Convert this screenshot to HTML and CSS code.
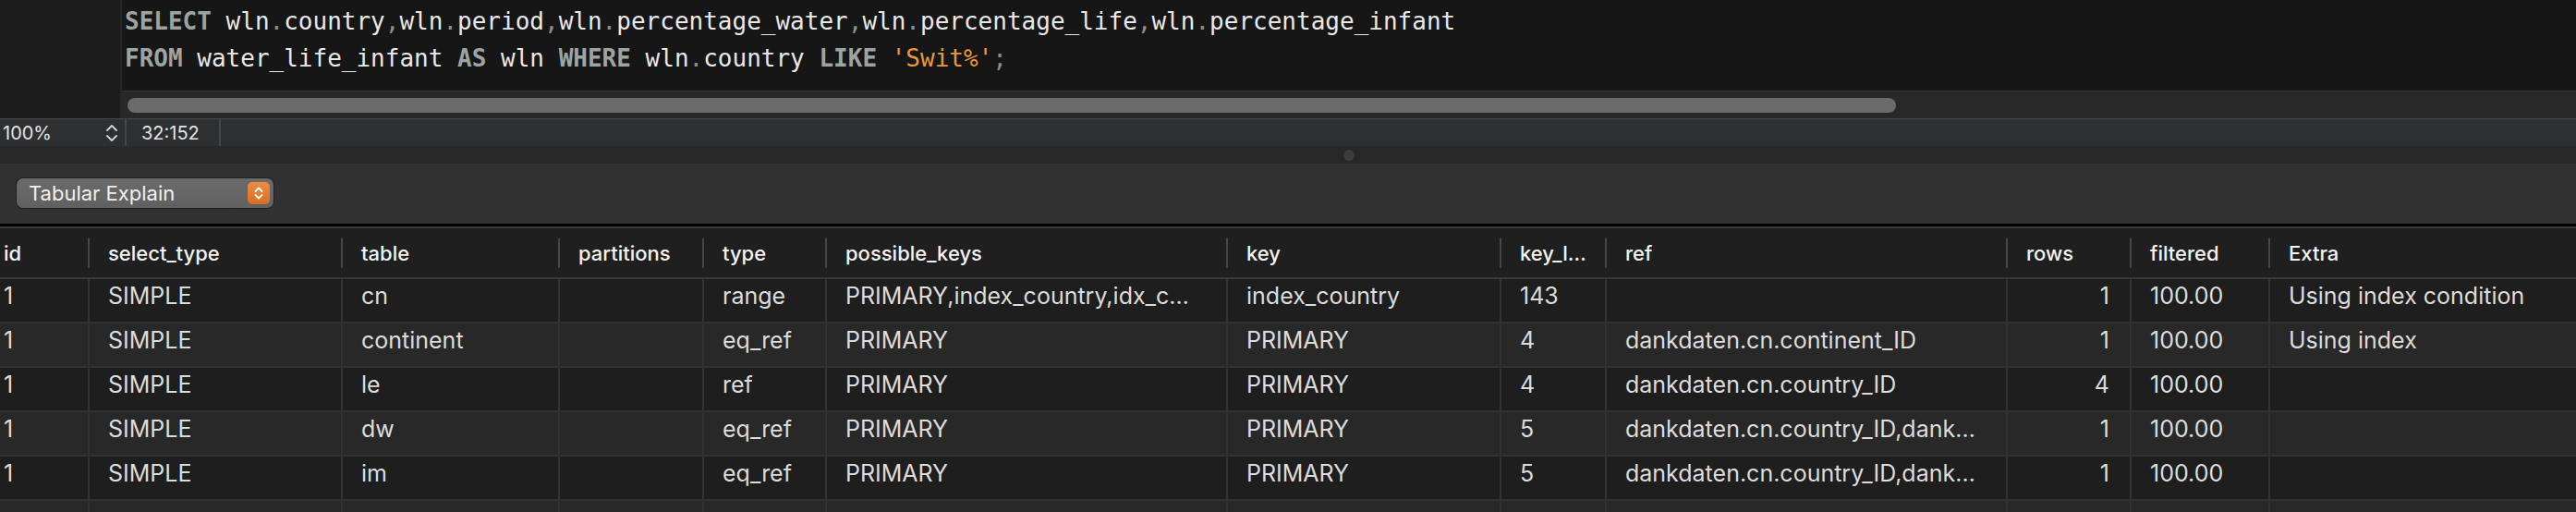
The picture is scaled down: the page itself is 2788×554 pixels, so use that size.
FILE: index.html
```html
<!DOCTYPE html>
<html>
<head>
<meta charset="utf-8">
<title>Explain</title>
<link rel="stylesheet" href="styles.css">
</head>
<body>
<div class="app">
  <section class="editor">
    <div class="gutter"></div>
    <div class="editor-main">
      <div class="code">
        <div class="line"><span class="kw">SELECT</span> wln<span class="pu">.</span>country<span class="pu">,</span>wln<span class="pu">.</span>period<span class="pu">,</span>wln<span class="pu">.</span>percentage_water<span class="pu">,</span>wln<span class="pu">.</span>percentage_life<span class="pu">,</span>wln<span class="pu">.</span>percentage_infant</div>
        <div class="line"><span class="kw">FROM</span> water_life_infant <span class="kw">AS</span> wln <span class="kw">WHERE</span> wln<span class="pu">.</span>country <span class="kw">LIKE</span> <span class="str">'Swit%'</span><span class="pu">;</span></div>
      </div>
      <div class="hscroll"><div class="thumb"></div></div>
    </div>
  </section>

  <div class="statusbar">
    <div class="zoom">
      <span>100%</span>
      <svg class="stepper" width="16" height="22" viewBox="0 0 16 22"><path d="M3 8 L8 3 L13 8 M3 14 L8 19 L13 14" fill="none" stroke="#cfcfcf" stroke-width="2" stroke-linecap="round" stroke-linejoin="round"/></svg>
    </div>
    <div class="pos">32:152</div>
  </div>

  <div class="splitter"><span class="grip"></span></div>

  <div class="toolbar">
    <div class="select">
      <span class="select-label">Tabular Explain</span>
      <span class="select-btn"><svg width="24" height="24" viewBox="0 0 24 24"><path d="M8.5 10 L12 6.5 L15.5 10 M8.5 14 L12 17.5 L15.5 14" fill="none" stroke="#ffffff" stroke-width="2" stroke-linecap="round" stroke-linejoin="round"/></svg></span>
    </div>
  </div>

  <div class="grid">
    <div class="row head">
      <div class="c first">id</div><div class="c">select_type</div><div class="c">table</div><div class="c">partitions</div><div class="c">type</div><div class="c">possible_keys</div><div class="c">key</div><div class="c">key_l…</div><div class="c">ref</div><div class="c">rows</div><div class="c">filtered</div><div class="c last">Extra</div>
    </div>
    <div class="row odd">
      <div class="c first">1</div><div class="c">SIMPLE</div><div class="c">cn</div><div class="c"></div><div class="c">range</div><div class="c">PRIMARY,index_country,idx_c…</div><div class="c">index_country</div><div class="c">143</div><div class="c"></div><div class="c num">1</div><div class="c">100.00</div><div class="c last">Using index condition</div>
    </div>
    <div class="row even">
      <div class="c first">1</div><div class="c">SIMPLE</div><div class="c">continent</div><div class="c"></div><div class="c">eq_ref</div><div class="c">PRIMARY</div><div class="c">PRIMARY</div><div class="c">4</div><div class="c">dankdaten.cn.continent_ID</div><div class="c num">1</div><div class="c">100.00</div><div class="c last">Using index</div>
    </div>
    <div class="row odd">
      <div class="c first">1</div><div class="c">SIMPLE</div><div class="c">le</div><div class="c"></div><div class="c">ref</div><div class="c">PRIMARY</div><div class="c">PRIMARY</div><div class="c">4</div><div class="c">dankdaten.cn.country_ID</div><div class="c num">4</div><div class="c">100.00</div><div class="c last"></div>
    </div>
    <div class="row even">
      <div class="c first">1</div><div class="c">SIMPLE</div><div class="c">dw</div><div class="c"></div><div class="c">eq_ref</div><div class="c">PRIMARY</div><div class="c">PRIMARY</div><div class="c">5</div><div class="c">dankdaten.cn.country_ID,dank…</div><div class="c num">1</div><div class="c">100.00</div><div class="c last"></div>
    </div>
    <div class="row odd">
      <div class="c first">1</div><div class="c">SIMPLE</div><div class="c">im</div><div class="c"></div><div class="c">eq_ref</div><div class="c">PRIMARY</div><div class="c">PRIMARY</div><div class="c">5</div><div class="c">dankdaten.cn.country_ID,dank…</div><div class="c num">1</div><div class="c">100.00</div><div class="c last"></div>
    </div>
    <div class="row even">
      <div class="c first"></div><div class="c"></div><div class="c"></div><div class="c"></div><div class="c"></div><div class="c"></div><div class="c"></div><div class="c"></div><div class="c"></div><div class="c"></div><div class="c"></div><div class="c last"></div>
    </div>
  </div>
</div>
</body>
</html>
```

FILE: styles.css
```css
* { box-sizing: border-box; }
html, body { margin: 0; padding: 0; }
body {
  width: 2788px;
  height: 554px;
  overflow: hidden;
  background: #1e1e1e;
  font-family: Inter, "Noto Sans", "Liberation Sans", sans-serif;
  color: #dcdcdc;
}

/* editor */
.editor { display: flex; height: 128px; background: #161616; }
.gutter { flex: none; width: 132px; background: #1c1c1c; border-right: 2px solid #262626; }
.editor-main { flex: 1; min-width: 0; display: flex; flex-direction: column; }
.code {
  height: 98px;
  padding: 3px 0 0 3px;
  font-family: "DejaVu Sans Mono", "Liberation Mono", monospace;
  font-size: 26px;
  line-height: 40px;
  color: #e8e8e8;
}
.line { white-space: pre; height: 40px; }
.kw { color: #9ea3a3; font-weight: bold; }
.pu { color: #8e8e8e; }
.str { color: #e8993a; }
.hscroll { height: 30px; background: #282828; border-top: 1px solid #323232; padding: 7px 0 0 6px; }
.thumb { width: 1914px; height: 16px; border-radius: 8px; background: #6b6b6b; }

/* status bar */
.statusbar {
  display: flex;
  height: 30px;
  background: #2e2f31;
  border-top: 1px solid #464646;
  font-size: 20px;
  color: #e4e4e4;
}
.zoom {
  width: 137px;
  display: flex;
  align-items: center;
  justify-content: space-between;
  padding: 0 6px 0 3px;
  border-right: 2px solid #454545;
}
.stepper { display: block; }
.pos {
  width: 102px;
  display: flex;
  align-items: center;
  padding-left: 16px;
  border-right: 2px solid #454545;
}

/* splitter */
.splitter {
  height: 19px;
  background: #282828;
  display: flex;
  align-items: center;
  justify-content: center;
  padding-left: 132px;
}
.grip { width: 12px; height: 12px; border-radius: 50%; background: #3c3c3c; }

/* toolbar */
.toolbar {
  height: 68px;
  background: #313131;
  border-bottom: 3px solid #000;
  padding: 16px 0 0 18px;
}
.select {
  width: 278px;
  height: 32px;
  border-radius: 7px;
  background: linear-gradient(#6b6b6b, #606060);
  box-shadow: 0 0 0 1px rgba(0,0,0,0.35);
  display: flex;
  align-items: center;
  justify-content: space-between;
  padding: 0 4px 0 13px;
  font-size: 22px;
  color: #f0f0f0;
}
.select-btn {
  width: 24px;
  height: 24px;
  border-radius: 5px;
  background: linear-gradient(#ee8c3e, #d86e22);
  display: flex;
  align-items: center;
  justify-content: center;
}
.select-btn svg { display: block; }

/* grid */
.grid { border-top: 2px solid #383838; }
.row {
  display: grid;
  grid-template-columns: 97px 274px 235px 156px 133px 434px 296px 114px 434px 134px 150px 1fr;
}
.c {
  padding: 0 20px;
  white-space: nowrap;
  overflow: hidden;
  border-right: 2px solid #323232;
}
.c.first { padding-left: 4px; }
.c.last { border-right: none; }
.c.num { text-align: right; padding-right: 22px; }

.head {
  height: 55px;
  align-items: center;
  background: #1f1f1f;
  border-bottom: 2px solid #383838;
  font-size: 22px;
  font-weight: 500;
  color: #f2f2f2;
}
.head .c {
  height: 32px;
  line-height: 32px;
  border-right-color: #474747;
}
.head .c.last { border-right: none; }

.row.odd, .row.even {
  height: 48px;
  border-bottom: 2px solid #323232;
  font-size: 25px;
  line-height: 36px;
}
.row.odd { background: #1e1e1e; }
.row.even { background: #282828; }
```
